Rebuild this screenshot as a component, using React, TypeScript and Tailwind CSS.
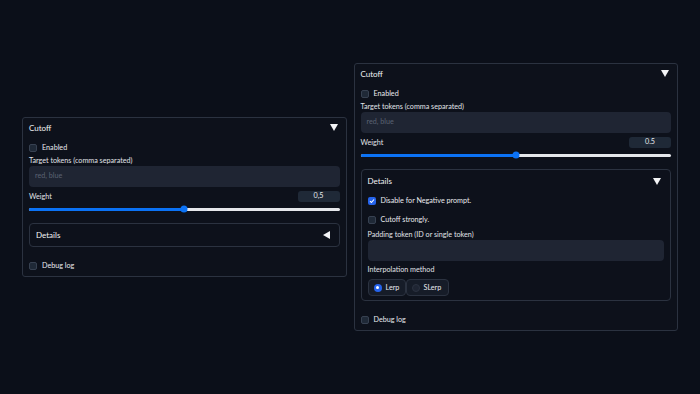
import React from "react";

const font = { fontFamily: "Lato, 'Noto Sans', sans-serif" };

function Tri({ dir }: { dir: "down" | "left" }) {
  return dir === "down" ? (
    <svg width="8" height="7" viewBox="0 0 8 7" className="shrink-0">
      <polygon points="0,0 8,0 4,7" fill="#f3f4f6" />
    </svg>
  ) : (
    <svg width="7" height="8" viewBox="0 0 7 8" className="shrink-0">
      <polygon points="7,0 7,8 0,4" fill="#f3f4f6" />
    </svg>
  );
}

function Check({ checked = false, label }: { checked?: boolean; label: string }) {
  return (
    <div className="flex items-center h-[8px] gap-[5px]">
      {checked ? (
        <div className="w-[8px] h-[8px] rounded-[2px] bg-[#2563eb] flex items-center justify-center">
          <svg width="6" height="6" viewBox="0 0 6 6">
            <polyline points="1,3.2 2.4,4.5 5,1.5" fill="none" stroke="white" strokeWidth="1.1" />
          </svg>
        </div>
      ) : (
        <div className="w-[8px] h-[8px] rounded-[2px] bg-[#1f2937] border border-[#374151]" />
      )}
      <span className="text-[7.2px] text-[#e8eaee] leading-none">{label}</span>
    </div>
  );
}

function Label({ children }: { children: React.ReactNode }) {
  return (
    <div className="h-[10px] flex items-center text-[7.2px] text-[#e0e3e8] leading-none">{children}</div>
  );
}

function Slider({ value }: { value: string }) {
  return (
    <>
      <div className="flex items-center justify-between h-[11px] mt-[4px]">
        <span className="text-[7.2px] text-[#e0e3e8] leading-none">Weight</span>
        <div className="w-[42px] h-[11px] rounded-[3px] bg-[#1f2937] flex items-center justify-center text-[7.2px] text-[#e8eaee]">
          {value}
        </div>
      </div>
      <div className="relative h-[8px] mt-[3px] flex items-center">
        <div className="w-full h-[3px] rounded-full bg-[#e5e7eb] flex">
          <div className="w-1/2 h-full rounded-full bg-[#0b72f5]" />
        </div>
        <div className="absolute left-1/2 top-1/2 -translate-x-1/2 -translate-y-1/2 w-[7px] h-[7px] rounded-full bg-[#0b72f5]" />
      </div>
    </>
  );
}

function Panel({ open }: { open: boolean }) {
  return (
    <div className="flex-1 border border-[#2b3240] rounded-[3px] bg-[#0d111b] px-[6px]">
      <div className="h-[19px] flex items-center justify-between pr-[2px]">
        <span className="text-[8px] text-[#f3f4f6] leading-none">Cutoff</span>
        <Tri dir="down" />
      </div>
      <div className="mt-[7px]">
        <Check label="Enabled" />
      </div>
      <div className="mt-[4px]">
        <Label>Target tokens (comma separated)</Label>
      </div>
      <div className="h-[21px] rounded-[4px] bg-[#1f2533] flex items-center px-[6px] text-[7.2px] text-[#5b6372]">
        red, blue
      </div>
      <Slider value={open ? "0.5" : "0,5"} />
      <div className="mt-[10px] border border-[#2b3240] rounded-[4px] px-[6px]">
        <div className="h-[22px] flex items-center justify-between pr-[3px]">
          <span className="text-[8px] text-[#f3f4f6] leading-none">Details</span>
          <Tri dir={open ? "down" : "left"} />
        </div>
        {open && (
          <div className="pb-[4px]">
            <div className="mt-[5px]">
              <Check checked label="Disable for Negative prompt." />
            </div>
            <div className="mt-[11px]">
              <Check label="Cutoff strongly." />
            </div>
            <div className="mt-[6px]">
              <Label>Padding token (ID or single token)</Label>
            </div>
            <div className="h-[21px] rounded-[4px] bg-[#1f2533]" />
            <div className="mt-[4px]">
              <Label>Interpolation method</Label>
            </div>
            <div className="flex mt-[4px]">
              <div className="h-[17px] w-[38px] rounded-[4px] bg-[#161c28] border border-[#2b3240] flex items-center gap-[4px] px-[5px]">
                <div className="w-[8px] h-[8px] rounded-full bg-[#2563eb] flex items-center justify-center">
                  <div className="w-[3px] h-[3px] rounded-full bg-white" />
                </div>
                <span className="text-[7.2px] text-[#e8eaee] leading-none">Lerp</span>
              </div>
              <div className="h-[17px] w-[43px] rounded-[4px] bg-[#161c28] border border-[#2b3240] flex items-center gap-[4px] px-[5px]">
                <div className="w-[8px] h-[8px] rounded-full bg-[#1f2533] border border-[#2b3240]" />
                <span className="text-[7.2px] text-[#e8eaee] leading-none">SLerp</span>
              </div>
            </div>
          </div>
        )}
      </div>
      <div className="mt-[15px] mb-[6px]">
        <Check label="Debug log" />
      </div>
    </div>
  );
}

export default function App() {
  return (
    <div className="w-[700px] h-[394px] bg-[#0b0f19] flex items-center px-[22px] gap-[7px]" style={font}>
      <Panel open={false} />
      <Panel open={true} />
    </div>
  );
}
